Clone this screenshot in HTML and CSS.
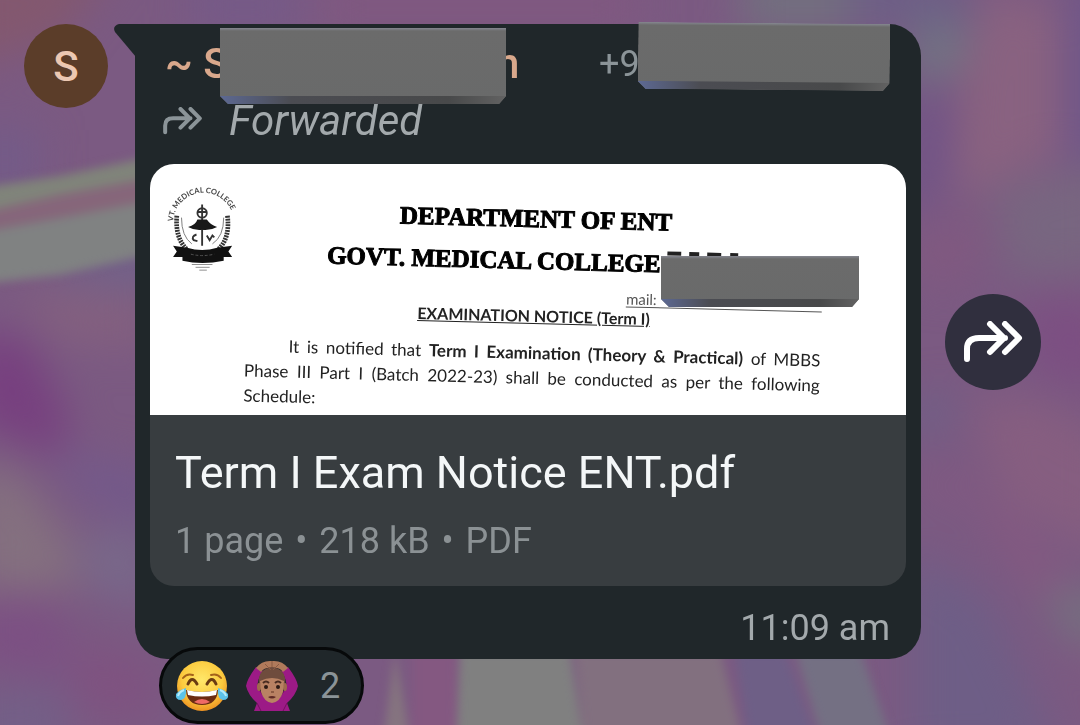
FILE: index.html
```html
<!DOCTYPE html>
<html lang="en">
<head>
    <meta charset="UTF-8">
    <meta name="viewport" content="width=device-width, initial-scale=1.0">
    <title>Group chat</title>
    <link rel="stylesheet" href="styles.css">
</head>
<body>
    <svg class="wallpaper" viewBox="0 0 1080 725" preserveAspectRatio="none" aria-hidden="true">
        <defs>
            <filter id="soft" x="-20%" y="-20%" width="140%" height="140%" color-interpolation-filters="sRGB"><feGaussianBlur stdDeviation="20"/></filter>
            <filter id="edge" x="-20%" y="-20%" width="140%" height="140%" color-interpolation-filters="sRGB"><feGaussianBlur stdDeviation="5"/></filter>
        </defs>
        <rect width="1080" height="725" fill="#7b5a82"/>
        <g filter="url(#soft)">
            <path d="M-40-40H120L60 40-40 70z" fill="#83586f"/>
            <path d="M190-20H300V30H190z" fill="#755a88"/>
            <path d="M320-20H640V30H320z" fill="#805880"/>
            <path d="M740-30H850V30H740z" fill="#72707f"/>
            <path d="M850-30H970V30H850z" fill="#6d5f86"/>
            <path d="M-30 130H40V190H-30z" fill="#735b88"/>
            <path d="M40 270L160 230V290L60 280z" fill="#70628a"/>
            <path d="M20 290L150 290V350L50 340z" fill="#83607f"/>
            <path d="M-30 330L30 340 70 420 60 460-30 420z" fill="#77407f"/>
            <path d="M50 450L160 470V530L80 500z" fill="#73598a"/>
            <path d="M-30 460L20 475 70 540 80 590-30 590z" fill="#84707f"/>
            <path d="M80 530L150 530V610L90 590z" fill="#78688a"/>
            <path d="M-30 600L60 600 70 680-30 660z" fill="#7c5083"/>
            <path d="M-30 690H70V760H-30z" fill="#735f87"/>
            <path d="M80 640L160 670 150 720 70 710z" fill="#7f5280"/>
            <path d="M915 20L970 30 960 70 915 90z" fill="#707583"/>
            <path d="M985-10L1060 10 1060 150 1000 180 950 200 960 90z" fill="#896280"/>
            <path d="M920 90L945 90 945 180 915 230z" fill="#6b5089"/>
            <path d="M1070-20H1110V160H1070z" fill="#6c558a"/>
            <path d="M990 190L1110 160V270L1010 280z" fill="#786680"/>
            <path d="M910 220L1000 220 960 290 910 280z" fill="#805980"/>
            <path d="M1020 300L1110 300V400L1030 370z" fill="#7c4f82"/>
            <path d="M910 400L960 390 940 440 910 430z" fill="#6e6086"/>
            <path d="M970 400L1040 400 1110 440V560L1000 500z" fill="#865e80"/>
            <path d="M910 480L960 480 1110 680V640L1000 510z" fill="#8c5880"/>
            <path d="M910 550L990 600 1060 760H910z" fill="#6e5e86"/>
            <path d="M1040 590L1110 590V650L1070 640z" fill="#75707f"/>
        </g>
        <g filter="url(#edge)">
            <path d="M-20 188L60 176 160 155V177L60 195-20 213z" fill="#80847a"/>
            <path d="M-20 213L60 195 160 177V202L60 218-20 232z" fill="#86667a"/>
            <path d="M-20 232L60 218 160 199V252L60 275-20 284z" fill="#808282"/>
            <path d="M395 650L412 750H382z" fill="#85747f"/>
            <path d="M412 650H456V750H412z" fill="#845881"/>
            <path d="M460 650H570L585 750H456z" fill="#808080"/>
            <path d="M575 650H720L745 750H585z" fill="#82707f"/>
            <path d="M735 650H785L820 750H750z" fill="#6e5f86"/>
            <path d="M795 650H860L895 750H825z" fill="#747083"/>
        </g>
    </svg>

    <svg class="sprite" aria-hidden="true">
        <symbol id="forward" viewBox="0 0 60 42">
            <path d="M4 38V28Q4 17 16 17H42M27 3L41 17 27 31M42 3L56 17 42 31" fill="none" stroke="currentColor" stroke-width="6" stroke-linecap="round" stroke-linejoin="round"/>
        </symbol>
    </svg>

    <main class="message">
        <div class="avatar">S</div>

        <article class="bubble">
            <svg class="tail" viewBox="0 0 22 33" aria-hidden="true">
                <path d="M22 0H5Q-2 2 1 8L22 33z" fill="#20272a"/>
            </svg>

            <header class="sender">
                <span class="name">~ S</span>
                <span class="name name-end">n</span>
                <span class="phone">+9</span>
            </header>
            <span class="slab slab-name"></span>
            <span class="slab slab-phone"></span>

            <p class="forwarded">
                <svg class="forwarded-icon" aria-hidden="true"><use href="#forward"/></svg>
                <em>Forwarded</em>
            </p>

            <section class="file">
                <div class="preview">
                    <svg class="emblem" viewBox="0 0 78 96" aria-hidden="true">
                        <path id="arc" d="M6 42A31 31 0 0 1 71 46" fill="none"/>
                        <text class="emblem-text"><textPath href="#arc">VT. MEDICAL COLLEGE</textPath></text>
                        <g fill="none" stroke="#333" stroke-width="5" stroke-dasharray="2 1">
                            <path d="M10 36Q8 60 21 72"/>
                            <path d="M64 36Q67 60 54 72"/>
                        </g>
                        <g fill="none" stroke="#777" stroke-width="1">
                            <path d="M15 38Q15 58 26 66M60 38Q60 58 48 66"/>
                        </g>
                        <g fill="none" stroke="#333" stroke-width="2">
                            <circle cx="37" cy="33" r="5"/>
                            <path d="M37 24V68M32 32H42"/>
                            <path d="M31 56Q25 58 28 62L32 63M42 57L45 62 48 57 50 59"/>
                        </g>
                        <path d="M22 48Q30 46 32 40H42Q46 46 53 48 46 52 37 51 29 52 22 48z" fill="#181818"/>
                        <path d="M6 68L21 70Q37 75 53 70L69 68 65 74 69 80 60 80V84Q37 89 16 84V80L6 80 10 74z" fill="#111"/>
                        <path d="M25 77Q37 80 50 77" fill="none" stroke="#555" stroke-width="1" stroke-dasharray="3 2"/>
                        <path d="M26 88H48M30 91H45M34 94H42" stroke="#888" stroke-width="1"/>
                    </svg>
                    <div class="sheet">
                        <h2>
                            <span>DEPARTMENT OF ENT</span>
                            <span>GOVT. MEDICAL COLLEGE
                                <svg class="cut" viewBox="0 0 76 36" aria-hidden="true">
                                    <path d="M0 5H14M22 5H32M40 5H54M63 5H71" stroke="#222" stroke-width="4"/>
                                </svg>
                            </span>
                        </h2>
                        <p class="mail"><span>mail:</span></p>
                        <h3>EXAMINATION NOTICE (Term I)</h3>
                        <div class="notice">
                            <p class="full first">It is notified that <b>Term I Examination (Theory &amp; Practical)</b> of MBBS</p>
                            <p class="full">Phase III Part I (Batch 2022-23) shall be conducted as per the following</p>
                            <p>Schedule:</p>
                        </div>
                    </div>
                    <span class="slab slab-mail"></span>
                </div>
                <div class="caption">
                    <h1>Term I Exam Notice ENT.pdf</h1>
                    <p>1 page <span class="dot">•</span> 218 kB <span class="dot">•</span> PDF</p>
                </div>
            </section>

            <time class="time">11:09 am</time>

            <button class="reactions" type="button" aria-label="2 reactions">
                <svg class="emoji" viewBox="0 0 54 54" aria-hidden="true">
                    <defs>
                        <radialGradient id="face" cx="50%" cy="38%" r="62%">
                            <stop offset="0" stop-color="#ffe86a"/>
                            <stop offset="0.65" stop-color="#fccb3f"/>
                            <stop offset="1" stop-color="#ee9322"/>
                        </radialGradient>
                    </defs>
                    <circle cx="27" cy="27" r="25" fill="url(#face)"/>
                    <path d="M8 19Q12 14 18 16M36 16Q42 14 46 19" fill="none" stroke="#a5621a" stroke-width="2" stroke-linecap="round"/>
                    <path d="M13 25Q17 16 22 25M32 25Q37 16 41 25" fill="none" stroke="#6b3c12" stroke-width="3" stroke-linecap="round"/>
                    <path d="M11 31Q27 35 43 31 42 46 27 46 12 46 11 31z" fill="#6b2c12"/>
                    <path d="M12 31Q27 35 42 31L41 36Q27 39 13 36z" fill="#fff"/>
                    <path d="M19 43Q27 37 35 43 27 47 19 43z" fill="#ef6a66"/>
                    <path d="M11 29Q12 40 6 41 0 41 1 35 4 31 11 29z" fill="#5cc3ea"/>
                    <path d="M43 29Q42 40 48 41 54 41 53 35 50 31 43 29z" fill="#5cc3ea"/>
                    <path d="M9 31Q4 33 3 37M45 31Q50 33 51 37" fill="none" stroke="#b5ecfb" stroke-width="2"/>
                </svg>
                <svg class="emoji" viewBox="0 0 54 54" aria-hidden="true">
                    <path d="M9 52L12 44Q3 36 1 27 2 20 11 8L18 12Q11 22 13 29L20 38H35L41 29Q43 22 36 12L43 8Q52 20 53 27 51 36 42 44L45 52z" fill="#9c1a86"/>
                    <path d="M12 44L16 52M42 44L38 52M13 29L19 38M41 29L35 38" fill="none" stroke="#74105f" stroke-width="1"/>
                    <path d="M11 9Q17 1 27 2 37 1 43 9L38 13Q34 8 27 9 20 8 16 13z" fill="#b07a5b"/>
                    <path d="M14 26Q12 10 27 8 42 10 40 26z" fill="#6f4c3d"/>
                    <ellipse cx="14" cy="28" rx="2" ry="4" fill="#a06a4c"/>
                    <ellipse cx="40" cy="28" rx="2" ry="4" fill="#a06a4c"/>
                    <path d="M15 22Q27 16 39 22L38 33Q35 43 27 44 19 43 16 33z" fill="#b98263"/>
                    <path d="M18 24Q21 21 24 24M30 24Q33 21 36 24" fill="none" stroke="#4a2d22" stroke-width="2"/>
                    <circle cx="21" cy="28" r="2" fill="#2d1a15"/>
                    <circle cx="33" cy="28" r="2" fill="#2d1a15"/>
                    <path d="M26 33H29" stroke="#8d5b43" stroke-width="2"/>
                    <path d="M23 38Q27 36 31 38 27 41 23 38z" fill="#5e2a25"/>
                    <path d="M20 5L26 11M34 5L28 11M27 2V8" stroke="#8a5a42" stroke-width="1"/>
                </svg>
                <span>2</span>
            </button>
        </article>

        <button class="forward-button" type="button" aria-label="Forward">
            <svg aria-hidden="true"><use href="#forward"/></svg>
        </button>
    </main>
</body>
</html>
```
FILE: styles.css
```css
* {
    box-sizing: border-box;
}
body {
    margin: 0;
    min-height: 100vh;
    background-color: #7b5a82;
    font-family: Roboto, "Liberation Sans", sans-serif;
    color: #a3a9ac;
}
h1, h2, h3, p {
    margin: 0;
    font-weight: 400;
}
button {
    border: none;
    padding: 0;
    font-family: inherit;
    cursor: pointer;
}
.wallpaper {
    position: fixed;
    top: 0;
    left: 0;
    width: 100%;
    height: 100%;
    z-index: -1;
}
.sprite {
    display: none;
}
.message {
    display: flex;
    align-items: flex-start;
    padding: 24px 39px 65px 24px;
}
.avatar {
    flex: none;
    width: 84px;
    height: 84px;
    margin-right: 27px;
    border-radius: 50%;
    background-color: #5b3d29;
    color: #ecc8b2;
    font-size: 42px;
    font-weight: 500;
    line-height: 86px;
    text-align: center;
}
.bubble {
    position: relative;
    flex: 1;
    min-width: 0;
    padding: 16px 15px 9px;
    border-radius: 0 32px 32px 32px;
    background-color: #20272a;
}
.tail {
    position: absolute;
    top: 0;
    left: -21px;
    width: 22px;
    height: 33px;
}

/* sender line */
.sender {
    display: flex;
    align-items: center;
    padding-left: 15px;
    line-height: 48px;
}
.name {
    width: 331px;
    color: #d9a88c;
    font-size: 42px;
    font-weight: 500;
}
.name-end {
    width: 103px;
}
.phone {
    color: #8b9498;
    font-size: 36px;
}
.forwarded {
    display: flex;
    align-items: center;
    gap: 26px;
    margin-top: 9px;
    padding-left: 12px;
    font-size: 42px;
    line-height: 48px;
}
.forwarded-icon {
    width: 41px;
    height: 28px;
    color: #8b9498;
}

/* grey blocks over private details */
.slab {
    position: absolute;
    z-index: 1;
    background: linear-gradient(#858790 0, #6b6b6b 3px, #696a6a 100%);
    clip-path: polygon(0 0, 100% 0, 100% calc(100% - 8px), calc(100% - 7px) 100%, 8px 100%, 0 calc(100% - 8px));
}
.slab::after {
    content: "";
    position: absolute;
    left: 0;
    right: 0;
    bottom: 0;
    height: 8px;
    background: linear-gradient(90deg, #5d6993, #4b4c52 25%, #48494a 80%, #626262);
}
.slab-name {
    top: 4px;
    left: 85px;
    width: 286px;
    height: 76px;
}
.slab-phone {
    top: -1px;
    right: 31px;
    width: 252px;
    height: 67px;
    transform: rotate(0.5deg);
}

/* pdf card */
.file {
    margin-top: 19px;
    border-radius: 24px;
    background-color: #383d40;
    overflow: hidden;
}
.preview {
    position: relative;
    display: flex;
    gap: 3px;
    padding: 18px 84px 0 15px;
    background-color: #fff;
    color: #222;
    overflow: hidden;
}
.emblem {
    flex: none;
    width: 78px;
    height: 90px;
}
.emblem-text {
    font-family: Lato, sans-serif;
    font-size: 8px;
    font-weight: 700;
    fill: #444;
}
.sheet {
    flex: 1;
    padding-top: 16px;
    font-family: Lato, "Open Sans", sans-serif;
    font-size: 17px;
    line-height: 25px;
    transform: rotate(1.5deg);
}
.sheet h2 {
    color: #000;
    font-family: "Liberation Serif", serif;
    font-size: 25px;
    font-weight: 700;
    line-height: 42px;
    text-align: center;
    -webkit-text-stroke: 1px #000;
}
.sheet h2 span {
    display: block;
    white-space: nowrap;
}
.cut {
    width: 76px;
    height: 36px;
    vertical-align: middle;
}
.mail {
    display: flex;
    justify-content: flex-end;
    margin-top: 6px;
    font-size: 15px;
    line-height: 16px;
    color: #555;
}
.mail span {
    width: 196px;
    border-bottom: 1px solid #555;
}
.sheet h3 {
    margin-top: 3px;
    font-size: 16px;
    font-weight: 700;
    line-height: 16px;
    text-align: center;
    text-decoration: underline;
}
.notice {
    margin-top: 16px;
}
.full {
    text-align-last: justify;
}
.first {
    padding-left: 44px;
}
.slab-mail {
    top: 92px;
    right: 47px;
    width: 198px;
    height: 51px;
}
.caption {
    padding: 32px 25px 23px;
}
.caption h1 {
    color: #f4f7f8;
    font-size: 45px;
    line-height: 52px;
}
.caption p {
    margin-top: 20px;
    color: #8b9194;
    font-size: 36px;
    line-height: 44px;
}
.dot {
    margin: 0 3px;
}
.time {
    display: block;
    margin-top: 20px;
    padding-right: 16px;
    font-size: 36px;
    line-height: 44px;
    text-align: right;
}

/* overlaps the bottom edge of the bubble */
.reactions {
    position: absolute;
    left: 24px;
    bottom: -65px;
    display: flex;
    align-items: center;
    gap: 16px;
    height: 77px;
    padding: 0 21px 0 13px;
    border: 3px solid #07090a;
    border-radius: 39px;
    background-color: #20272a;
    color: #8b9498;
    font-size: 36px;
}
.reactions span {
    padding-left: 5px;
}
.emoji {
    width: 54px;
    height: 54px;
}
.forward-button {
    flex: none;
    align-self: center;
    display: flex;
    align-items: center;
    justify-content: center;
    width: 96px;
    height: 96px;
    margin-left: 24px;
    border-radius: 50%;
    background-color: #302f3e;
    color: #fff;
}
.forward-button svg {
    width: 60px;
    height: 42px;
}
```
